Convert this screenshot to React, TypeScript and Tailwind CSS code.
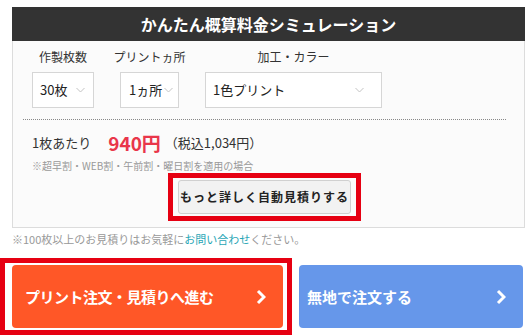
import React from "react";

function Chevron({ className }: { className?: string }) {
  return (
    <svg viewBox="0 0 10 6" className={className} fill="none">
      <path d="M1 1l4 4 4-4" stroke="#c4c4c4" strokeWidth="1" />
    </svg>
  );
}

function Arrow() {
  return (
    <svg viewBox="0 0 10 16" className="h-[16px] w-[10px]" fill="none">
      <path d="M2 2l6 6-6 6" stroke="#fff" strokeWidth="3" strokeLinejoin="miter" />
    </svg>
  );
}

function SelectBox({ label, value, width, pad, chevronPad }: { label: string; value: string; width: string; pad: string; chevronPad: string }) {
  return (
    <div className={`flex shrink-0 flex-col items-center ${width}`}>
      <div className="mb-[7px] whitespace-nowrap text-[12px] leading-[16px] text-[#333]">{label}</div>
      <div className={`flex h-[36px] w-full items-center justify-between border border-[#d6d6d6] bg-white ${pad} ${chevronPad}`}>
        <span className="whitespace-nowrap text-[13px] leading-[16px] text-[#222]">{value}</span>
        <Chevron className="h-[6px] w-[11px] shrink-0" />
      </div>
    </div>
  );
}

export default function App() {
  return (
    <div className="h-[335px] w-[530px] overflow-hidden bg-white font-['Noto_Sans_CJK_JP','Noto_Sans',sans-serif]">
      <div className="pl-[12px] pr-[5px] pt-[7px]">
        <div className="flex h-[34px] items-center justify-center bg-[#333333] text-[16px] font-bold leading-[20px] text-white">
          かんたん概算料金シミュレーション
        </div>
        <div className="h-[187px] border border-t-0 border-[#dcdcdc] bg-[#fbfbfb]">
          <div className="flex gap-[26px] pl-[19px] pt-[8px]">
            <SelectBox label="作製枚数" value="30枚" width="w-[62px]" pad="pl-[7px]" chevronPad="pr-[7px]" />
            <SelectBox label="プリントヵ所" value="1ヵ所" width="w-[59px]" pad="pl-[8px]" chevronPad="pr-[4px]" />
            <SelectBox label="加工・カラー" value="1色プリント" width="w-[177px]" pad="pl-[7px]" chevronPad="pr-[16px]" />
          </div>
          <div className="ml-[10px] mr-[18px] mt-[11px] border-t border-dotted border-[#888]" />
          <div className="flex items-center pl-[19px] pt-[12px]">
            <span className="text-[13px] leading-[18px] text-[#333]">1枚あたり</span>
            <span className="ml-[17px] text-[19px] font-bold leading-[22px] text-[#e9364a]">940円</span>
            <span className="ml-[4px] text-[13px] leading-[18px] text-[#333]">（税込1,034円）</span>
          </div>
          <div className="whitespace-nowrap pl-[19px] pt-[5px] text-[10px] leading-[14px] text-[#999]">
            ※超早割・WEB割・午前割・曜日割を適用の場合
          </div>
          <div className="flex justify-center pr-[8px] pt-[0px]">
            <div className="border-[5px] border-[#e60012] px-[5px] py-[2px]">
              <button
                type="button"
                className="flex h-[34px] w-[173px] items-center justify-center whitespace-nowrap rounded-[3px] border border-[#d0d0d0] bg-[#f2f2f2] text-[12px] font-bold leading-[16px] tracking-[1px] text-[#222]"
              >
                もっと詳しく自動見積りする
              </button>
            </div>
          </div>
        </div>
      </div>
      <div className="whitespace-nowrap pl-[12px] pt-[3px] text-[11px] leading-[16px] text-[#999]">
        ※100枚以上のお見積りはお気軽に<span className="text-[#1fa5b5]">お問い合わせ</span>ください。
      </div>
      <div className="mt-[11px] flex items-start">
        <div className="border-[5px] border-[#e60012] pb-[2px] pl-[7px] pr-[4px] pt-[2px]">
          <button
            type="button"
            className="flex h-[63px] w-[271px] items-center justify-between whitespace-nowrap rounded-[4px] bg-[#ff5727] pl-[13px] pr-[17px] text-[15px] font-bold leading-[20px] tracking-[-0.5px] text-white"
          >
            <span>プリント注文・見積りへ進む</span>
            <Arrow />
          </button>
        </div>
        <button
          type="button"
          className="ml-[7px] mt-[7px] flex h-[63px] w-[224px] items-center justify-between whitespace-nowrap rounded-[4px] bg-[#6697ea] pl-[8px] pr-[17px] text-[15px] font-bold leading-[20px] text-white"
        >
          <span>無地で注文する</span>
          <Arrow />
        </button>
      </div>
    </div>
  );
}
